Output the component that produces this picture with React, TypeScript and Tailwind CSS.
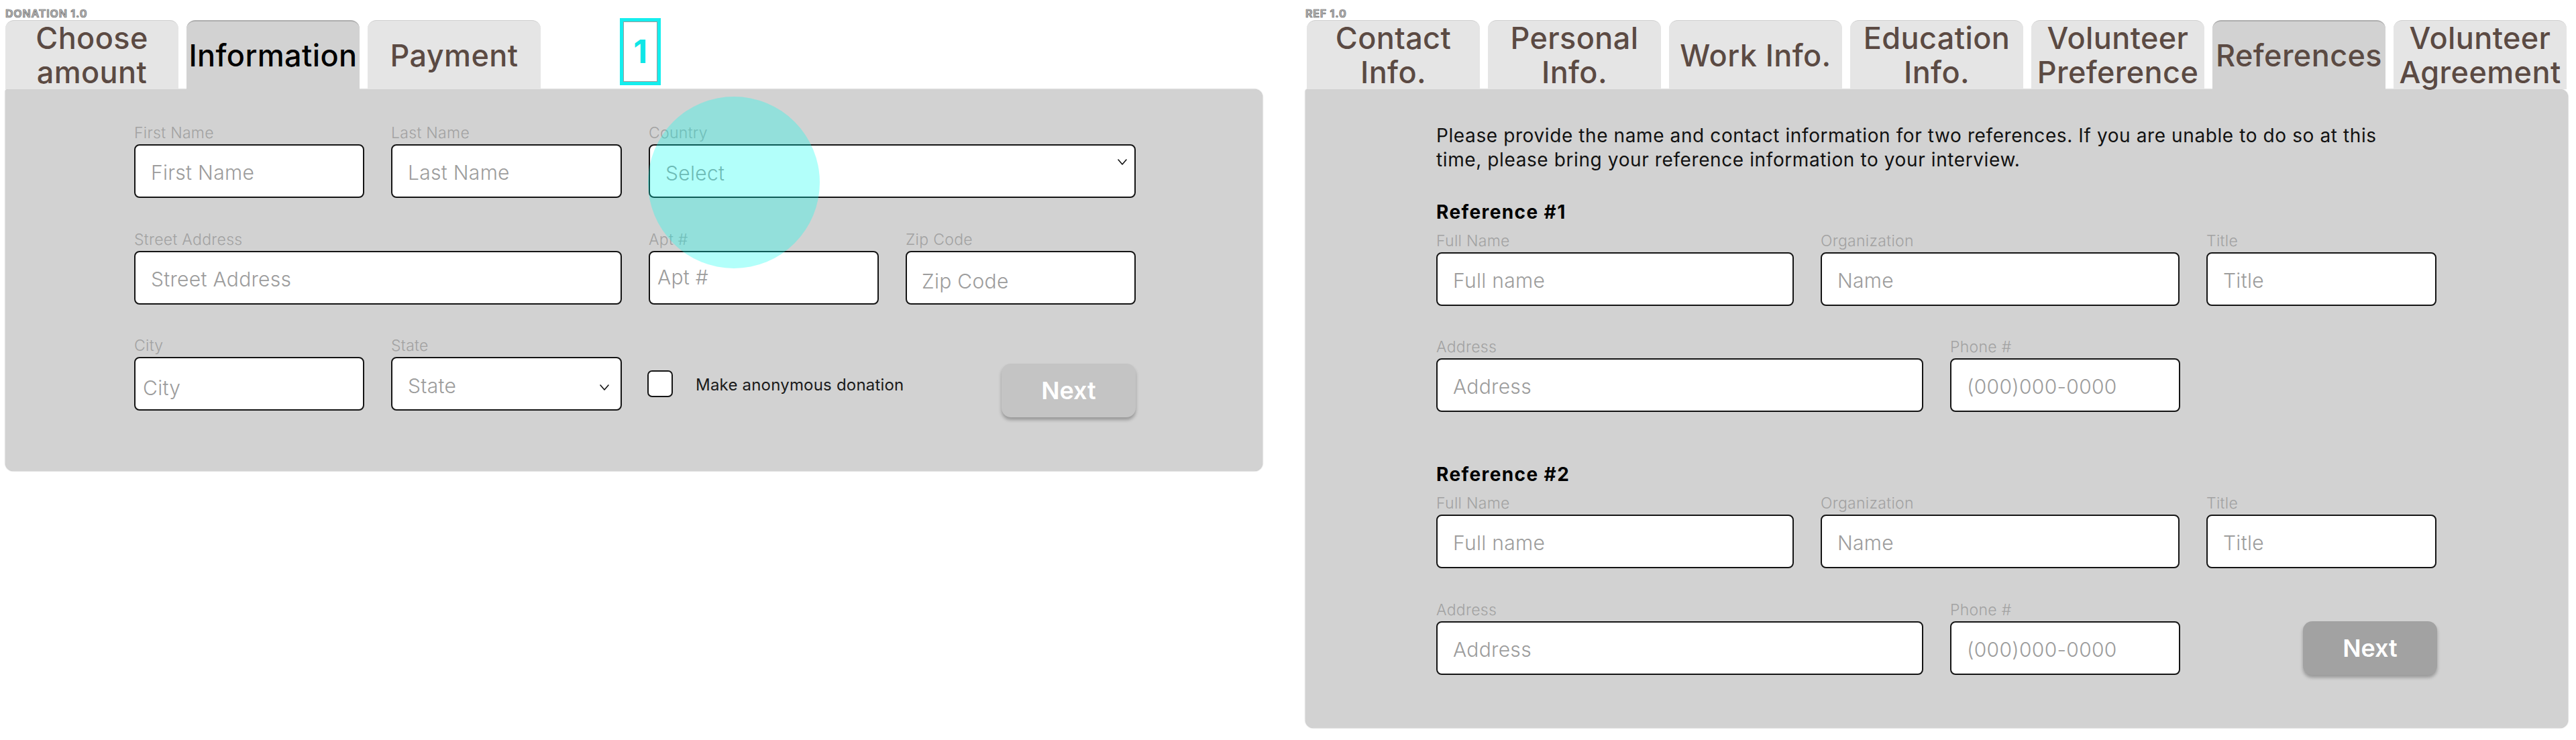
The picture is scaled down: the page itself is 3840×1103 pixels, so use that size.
import React from "react";

function Tab({ children, active, black }: { children: React.ReactNode; active?: boolean; black?: boolean }) {
  return (
    <div
      className={
        "w-[258px] h-[103px] shrink-0 rounded-t-[13px] flex items-center justify-center " +
        (active ? "bg-[#d2d2d2] border-t-2 border-[#aeaeae]" : "bg-[#e5e5e5] border-t border-[#cfcfcf]")
      }
    >
      <span
        className={
          "text-[45px] leading-[51px] font-medium tracking-[0.4px] text-center whitespace-nowrap " +
          (black ? "text-black" : "text-[#5b4a43]")
        }
      >
        {children}
      </span>
    </div>
  );
}

function Label({ children }: { children: React.ReactNode }) {
  return (
    <div className="h-[26px] text-[23px] leading-[26px] font-light tracking-[0.3px] text-[#a2a2a2] whitespace-nowrap">
      {children}
    </div>
  );
}

function TextField({
  label,
  placeholder,
  w,
  pad = "pl-[23px] pt-[4px]",
}: {
  label: string;
  placeholder: string;
  w: string;
  pad?: string;
}) {
  return (
    <div className={"flex flex-col shrink-0 " + w}>
      <Label>{label}</Label>
      <input
        readOnly
        placeholder={placeholder}
        className={
          "mt-[4px] h-[80px] w-full rounded-[8px] border-2 border-[#141414] bg-white text-[30px] font-light tracking-[0.3px] outline-none placeholder:text-[#9c9c9c] " +
          pad
        }
      />
    </div>
  );
}

function Chevron({ className }: { className: string }) {
  return (
    <svg className={className} width="14" height="9" viewBox="0 0 14 9" fill="none">
      <polyline points="1,1 7,8 13,1" stroke="#111" strokeWidth="1.6" strokeLinejoin="round" strokeLinecap="round" />
    </svg>
  );
}

function SelectField({
  label,
  value,
  w,
  chev,
  pr,
}: {
  label: string;
  value: string;
  w: string;
  chev: string;
  pr: string;
}) {
  return (
    <div className={"flex flex-col shrink-0 " + w}>
      <Label>{label}</Label>
      <div
        className={
          "mt-[4px] h-[80px] rounded-[8px] border-2 border-[#141414] bg-white flex justify-between pl-[23px] " + pr
        }
      >
        <span className="self-center pt-[6px] text-[30px] font-light tracking-[0.3px] text-[#9c9c9c]">{value}</span>
        <Chevron className={chev} />
      </div>
    </div>
  );
}

function NextButton({ bg }: { bg: string }) {
  return (
    <div
      className={
        "w-[200px] h-[80px] rounded-[14px] flex items-center justify-center text-white text-[36px] font-semibold shadow-[0_4px_5px_rgba(0,0,0,0.28)] " +
        bg
      }
    >
      Next
    </div>
  );
}

function FrameTitle({ children }: { children: React.ReactNode }) {
  return (
    <div className="h-[20px] text-[16px] leading-[20px] font-bold text-[#b5b5b5] [-webkit-text-stroke:0.7px_#6a6a6a] tracking-[0.8px]">
      {children}
    </div>
  );
}

export default function App() {
  return (
    <div className="relative flex w-[3840px] h-[1103px] bg-white font-[Inter,sans-serif] overflow-hidden">
      {/* Donation frame */}
      <div className="relative w-[1940px] shrink-0 pl-[8px] pt-[10px]">
        <FrameTitle>DONATION 1.0</FrameTitle>
        <div className="flex items-start gap-[12px]">
          <Tab>
            Choose
            <br />
            amount
          </Tab>
          <Tab active black>
            Information
          </Tab>
          <Tab>Payment</Tab>
          <div className="ml-[106px] -mt-[3px] w-[61px] h-[100px] bg-[#14eeee] p-[5px]">
            <div className="w-full h-full bg-white border border-[#9a9a9a] flex items-center justify-center">
              <span className="text-[48px] leading-none font-bold text-[#0fe6e6]">1</span>
            </div>
          </div>
        </div>
        <div className="w-[1874px] h-[569px] bg-[#d2d2d2] rounded-[12px] rounded-tl-[4px] shadow-[0_0_2px_rgba(0,0,0,0.4)] pl-[192px] pt-[52px]">
          <div className="flex gap-[40px]">
            <TextField label="First Name" placeholder="First Name" w="w-[343px]" />
            <TextField label="Last Name" placeholder="Last Name" w="w-[344px]" />
            <SelectField label="Country" value="Select" w="w-[726px]" chev="self-start mt-[20px]" pr="pr-[11px]" />
          </div>
          <div className="flex gap-[40px] mt-[49px]">
            <TextField label="Street Address" placeholder="Street Address" w="w-[727px]" />
            <TextField label="Apt #" placeholder="Apt #" w="w-[343px]" pad="pl-[11px] pb-[2px]" />
            <TextField label="Zip Code" placeholder="Zip Code" w="w-[343px]" pad="pl-[22px] pt-[10px]" />
          </div>
          <div className="flex gap-[40px] mt-[48px]">
            <TextField label="City" placeholder="City" w="w-[343px]" pad="pl-[11px] pt-[12px]" />
            <SelectField label="State" value="State" w="w-[344px]" chev="self-center mt-[10px]" pr="pr-[17px]" />
            <div className="w-[726px] flex items-start pt-[30px]">
              <div className="h-[80px] flex items-center -ml-[2px]">
                <div className="w-[38px] h-[40px] rounded-[7px] border-2 border-[#141414] bg-white" />
                <span className="ml-[34px] pt-[4px] text-[24px] tracking-[0.2px] font-normal text-[#1a1a1a]">
                  Make anonymous donation
                </span>
              </div>
              <div className="ml-auto mt-[10px]">
                <NextButton bg="bg-[#c4c4c4]" />
              </div>
            </div>
          </div>
        </div>
        <div className="absolute left-[966px] top-[144px] w-[256px] h-[256px] rounded-full bg-[#00fff0]/30" />
      </div>

      {/* Reference frame */}
      <div className="w-[1900px] shrink-0 pl-[6px] pt-[10px]">
        <FrameTitle>REF 1.0</FrameTitle>
        <div className="flex items-start gap-[12px] pl-[2px]">
          <Tab>
            Contact
            <br />
            Info.
          </Tab>
          <Tab>
            Personal
            <br />
            Info.
          </Tab>
          <Tab>Work Info.</Tab>
          <Tab>
            Education
            <br />
            Info.
          </Tab>
          <Tab>
            Volunteer
            <br />
            Preference
          </Tab>
          <Tab active>References</Tab>
          <Tab>
            Volunteer
            <br />
            Agreement
          </Tab>
        </div>
        <div className="w-[1882px] h-[952px] bg-[#d2d2d2] rounded-[12px] rounded-tl-[4px] shadow-[0_0_2px_rgba(0,0,0,0.4)] pl-[195px] pt-[51px]">
          <p className="text-[28px] leading-[36px] tracking-[0.6px] text-[#111] whitespace-nowrap">
            Please provide the name and contact information for two references. If you are unable to do so at this
            <br />
            time, please bring your reference information to your interview.
          </p>

          <div className="mt-[44px] text-[28px] leading-[32px] font-bold tracking-[1.4px] text-black">Reference #1</div>
          <div className="flex gap-[40px] mt-[14px]">
            <TextField label="Full Name" placeholder="Full name" w="w-[533px]" />
            <TextField label="Organization" placeholder="Name" w="w-[535px]" />
            <TextField label="Title" placeholder="Title" w="w-[343px]" />
          </div>
          <div className="flex gap-[40px] mt-[48px]">
            <TextField label="Address" placeholder="Address" w="w-[726px]" />
            <TextField label="Phone #" placeholder="(000)000-0000" w="w-[343px]" />
          </div>

          <div className="mt-[77px] text-[28px] leading-[32px] font-bold tracking-[1.4px] text-black">Reference #2</div>
          <div className="flex gap-[40px] mt-[14px]">
            <TextField label="Full Name" placeholder="Full name" w="w-[533px]" />
            <TextField label="Organization" placeholder="Name" w="w-[535px]" />
            <TextField label="Title" placeholder="Title" w="w-[343px]" />
          </div>
          <div className="flex gap-[40px] mt-[49px]">
            <TextField label="Address" placeholder="Address" w="w-[726px]" />
            <TextField label="Phone #" placeholder="(000)000-0000" w="w-[343px]" />
            <div className="w-[343px] flex justify-end pt-[30px]">
              <NextButton bg="bg-[#a2a2a2]" />
            </div>
          </div>
        </div>
      </div>
    </div>
  );
}
